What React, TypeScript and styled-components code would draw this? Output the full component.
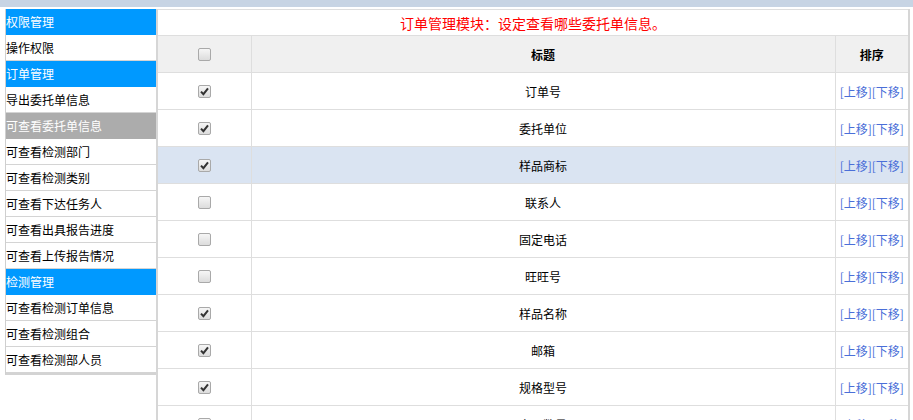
import React from "react";
import styled, { createGlobalStyle } from "styled-components";

const Global = createGlobalStyle`
  html, body { margin: 0; padding: 0; background: #fff; overflow: hidden; }
  body { font-family: "Microsoft YaHei", "Noto Sans CJK SC", "Liberation Sans", sans-serif; font-size: 12px; color: #000; }
`;

const TopBand = styled.div`
  height: 7px;
  background: #c7d4e4;
`;

const Layout = styled.div`
  display: flex;
  align-items: flex-start;
  padding: 2px 0 0 5px;
  height: 411px;
`;

const Sidebar = styled.ul`
  list-style: none;
  margin: 0;
  padding: 0;
  width: 150px;
  border-left: 1px solid #cfcfcf;
  border-bottom: 2px solid #d3d3d3;
`;

type Kind = "group" | "item" | "active";

const SideItem = styled.li<{ $kind: Kind }>`
  height: 25px;
  line-height: 25px;
  padding-left: 0;
  white-space: nowrap;
  font-size: 12px;
  border-bottom: 1px solid
    ${(p) => (p.$kind === "group" ? "#0099ff" : p.$kind === "active" ? "#acacac" : "#d4d4d4")};
  background: ${(p) => (p.$kind === "group" ? "#0099ff" : p.$kind === "active" ? "#acacac" : "#fff")};
  color: ${(p) => (p.$kind === "item" ? "#000" : "#fff")};
`;

const Main = styled.div`
  width: 750px;
  height: 100%;
  border-left: 2px solid #d6d6d6;
  border-right: 2px solid #d6d6d6;
  overflow: hidden;
`;

const Table = styled.table`
  width: 750px;
  border-collapse: collapse;
  table-layout: fixed;
  border-top: 1px solid #dedede;
`;

const TitleCell = styled.td`
  height: 25px;
  padding: 0;
  text-align: center;
  color: #ff0000;
  font-size: 14px;
  border-bottom: 1px solid #dedede;
`;

const HeadCell = styled.th`
  height: 36px;
  padding: 0;
  background: #f0f0f0;
  font-weight: bold;
  font-size: 12px;
  text-align: center;
  border-bottom: 1px solid #dedede;
  border-right: 1px solid #dedede;
  &:last-child { border-right: none; }
`;

const Row = styled.tr<{ $hl?: boolean }>`
  background: ${(p) => (p.$hl ? "#dae4f2" : "#fff")};
`;

const Cell = styled.td`
  height: 36px;
  padding: 0;
  text-align: center;
  font-size: 12px;
  border-bottom: 1px solid #dedede;
  border-right: 1px solid #dedede;
  &:last-child { border-right: none; }
`;

const Box = styled.span<{ $on: boolean }>`
  display: block;
  box-sizing: border-box;
  width: 13px;
  height: 13px;
  margin: 0 auto;
  border: 1px solid #a9a9a9;
  border-radius: 2px;
  background: linear-gradient(#f6f6f6, #dcdcdc);
  position: relative;
  svg { position: absolute; left: 1px; top: 1px; }
`;

const Link = styled.a`
  color: #4a6fd8;
  text-decoration: none;
  font-size: 12px;
`;

const Check = ({ on }: { on: boolean }) => (
  <Box $on={on}>
    {on && (
      <svg width="9" height="9" viewBox="0 0 9 9">
        <path d="M1 4.6 L3.4 7.2 L8 1.4" fill="none" stroke="#333" strokeWidth="2" />
      </svg>
    )}
  </Box>
);

const side: [string, Kind][] = [
  ["权限管理", "group"],
  ["操作权限", "item"],
  ["订单管理", "group"],
  ["导出委托单信息", "item"],
  ["可查看委托单信息", "active"],
  ["可查看检测部门", "item"],
  ["可查看检测类别", "item"],
  ["可查看下达任务人", "item"],
  ["可查看出具报告进度", "item"],
  ["可查看上传报告情况", "item"],
  ["检测管理", "group"],
  ["可查看检测订单信息", "item"],
  ["可查看检测组合", "item"],
  ["可查看检测部人员", "item"],
];

const rows: [string, boolean][] = [
  ["订单号", true],
  ["委托单位", true],
  ["样品商标", true],
  ["联系人", false],
  ["固定电话", false],
  ["旺旺号", false],
  ["样品名称", true],
  ["邮箱", true],
  ["规格型号", true],
  ["产品数量", false],
  ["检测项目", false],
];

export default function App() {
  return (
    <>
      <Global />
      <TopBand />
      <Layout>
        <Sidebar>
          {side.map(([t, k]) => (
            <SideItem key={t} $kind={k}>{t}</SideItem>
          ))}
        </Sidebar>
        <Main>
          <Table>
            <colgroup>
              <col style={{ width: 93 }} />
              <col style={{ width: 584 }} />
              <col style={{ width: 73 }} />
            </colgroup>
            <tbody>
              <tr>
                <TitleCell colSpan={3}>订单管理模块：设定查看哪些委托单信息。</TitleCell>
              </tr>
              <tr>
                <HeadCell><Check on={false} /></HeadCell>
                <HeadCell>标题</HeadCell>
                <HeadCell>排序</HeadCell>
              </tr>
              {rows.map(([t, on]) => (
                <Row key={t} $hl={t === "样品商标"}>
                  <Cell><Check on={on} /></Cell>
                  <Cell>{t}</Cell>
                  <Cell>
                    <Link href="#">[上移]</Link>
                    <Link href="#">[下移]</Link>
                  </Cell>
                </Row>
              ))}
            </tbody>
          </Table>
        </Main>
      </Layout>
    </>
  );
}
